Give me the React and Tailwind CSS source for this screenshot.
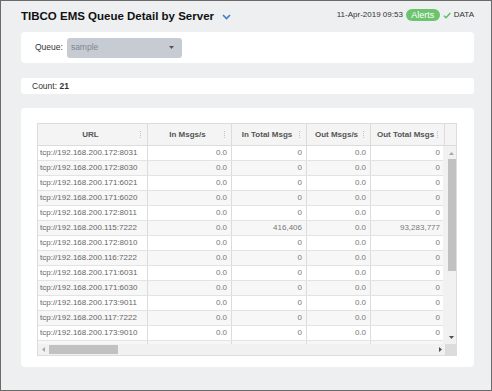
import React from "react";

const rows = [
  ["tcp://192.168.200.172:8031", "0.0", "0", "0.0", "0"],
  ["tcp://192.168.200.172:8030", "0.0", "0", "0.0", "0"],
  ["tcp://192.168.200.171:6021", "0.0", "0", "0.0", "0"],
  ["tcp://192.168.200.171:6020", "0.0", "0", "0.0", "0"],
  ["tcp://192.168.200.172:8011", "0.0", "0", "0.0", "0"],
  ["tcp://192.168.200.115:7222", "0.0", "416,406", "0.0", "93,283,777"],
  ["tcp://192.168.200.172:8010", "0.0", "0", "0.0", "0"],
  ["tcp://192.168.200.116:7222", "0.0", "0", "0.0", "0"],
  ["tcp://192.168.200.171:6031", "0.0", "0", "0.0", "0"],
  ["tcp://192.168.200.171:6030", "0.0", "0", "0.0", "0"],
  ["tcp://192.168.200.173:9011", "0.0", "0", "0.0", "0"],
  ["tcp://192.168.200.117:7222", "0.0", "0", "0.0", "0"],
  ["tcp://192.168.200.173:9010", "0.0", "0", "0.0", "0"],
  ["tcp://SLVMOOT10:7011", "0.0", "0", "0.0", "0"],
];

const cols = [
  { name: "URL", w: "w-[110px]" },
  { name: "In Msgs/s", w: "w-[84px]" },
  { name: "In Total Msgs", w: "w-[75px]" },
  { name: "Out Msgs/s", w: "w-[64px]" },
  { name: "Out Total Msgs", w: "w-[74px]" },
];

function SortIcon() {
  return (
    <svg width="3" height="7" viewBox="0 0 3 7" className="shrink-0">
      <rect x="1" y="0" width="1" height="1" fill="#c4c4c4" />
      <rect x="1" y="2" width="1" height="1" fill="#c4c4c4" />
      <rect x="1" y="4" width="1" height="1" fill="#c4c4c4" />
      <rect x="1" y="6" width="1" height="1" fill="#c4c4c4" />
    </svg>
  );
}

export default function App() {
  return (
    <div className="w-[492px] h-[391px] border border-[#6a6a6a] bg-[#edeff1] flex flex-col pl-[20px] pr-[17px] font-['Liberation_Sans',Arial,sans-serif] overflow-hidden">
      {/* Header */}
      <div className="h-[31px] flex items-start justify-between shrink-0">
        <div className="flex items-center pt-[8px]">
          <span className="text-[11.5px] leading-[14px] font-bold text-[#111]">
            TIBCO EMS Queue Detail by Server
          </span>
          <svg width="9" height="6" viewBox="0 0 9 6" className="ml-[8px] mt-[2px]">
            <path d="M1 1 L4.5 4.5 L8 1" stroke="#3f7fc4" strokeWidth="1.6" fill="none" />
          </svg>
        </div>
        <div className="flex items-center pt-[7px]">
          <span className="text-[8px] leading-[14px] text-[#333]">11-Apr-2019 09:53</span>
          <span className="ml-[3px] h-[12px] w-[34px] rounded-full bg-[#6cc46f] text-white text-[9px] leading-[12px] flex items-center justify-center">
            Alerts
          </span>
          <svg width="8" height="7" viewBox="0 0 8 7" className="ml-[3px]">
            <path d="M0.8 3.6 L3 5.8 L7.3 1" stroke="#5cb85c" strokeWidth="1.3" fill="none" />
          </svg>
          <span className="ml-[3px] text-[8px] leading-[14px] text-[#333]">DATA</span>
        </div>
      </div>

      {/* Queue card */}
      <div className="h-[31px] bg-white rounded-[4px] flex items-center pl-[14px] shrink-0">
        <span className="text-[8.5px] text-[#333]">Queue:</span>
        <div className="ml-[4px] w-[115px] h-[20px] rounded-[3px] bg-[#c7ccd4] flex items-center justify-between pl-[4px] pr-[8px]">
          <span className="text-[8.5px] text-[#7f8692]">sample</span>
          <svg width="5" height="3" viewBox="0 0 5 3">
            <path d="M0 0 L5 0 L2.5 3 Z" fill="#555" />
          </svg>
        </div>
      </div>

      {/* Count card */}
      <div className="mt-[15px] h-[16px] bg-white rounded-[3px] flex items-center pl-[11px] shrink-0">
        <span className="text-[8.5px] text-[#333]">
          Count: <span className="font-bold">21</span>
        </span>
      </div>

      {/* Table card */}
      <div className="mt-[14px] h-[259px] bg-white rounded-[4px] pl-[16px] pt-[15px] shrink-0">
        <div className="w-[420px] border border-[#dcdcdc] flex flex-col">
          {/* header */}
          <div className="flex h-[22px] bg-[#f4f4f4] border-b border-[#dcdcdc]">
            {cols.map((c, i) => (
              <div
                key={i}
                className={`${c.w} shrink-0 border-r border-[#dcdcdc] flex items-center pl-[4px] pr-[5px]`}
              >
                <span className="flex-1 text-center text-[8px] font-bold text-[#555] whitespace-nowrap">
                  {c.name}
                </span>
                <SortIcon />
              </div>
            ))}
            <div className="flex-1" />
          </div>
          {/* body */}
          <div className="flex h-[198px]">
            <div className="w-[407px] overflow-hidden">
              {rows.map((r, ri) => (
                <div
                  key={ri}
                  className={`flex h-[15px] border-b border-[#e3e3e3] ${ri % 2 === 1 ? "bg-[#f7f7f7]" : "bg-white"}`}
                >
                  {r.map((v, ci) => (
                    <div
                      key={ci}
                      className={`${cols[ci].w} shrink-0 border-r border-[#dcdcdc] flex items-center text-[8px] whitespace-nowrap ${
                        ci === 0 ? "pl-[2px] text-[#666]" : "justify-end pr-[4px] text-[#777]"
                      }`}
                    >
                      {v}
                    </div>
                  ))}
                </div>
              ))}
            </div>
            {/* vertical scrollbar */}
            <div className="w-[13px] bg-[#f1f1f1] flex flex-col items-center">
              <svg width="5" height="3" viewBox="0 0 5 3" className="mt-[6px] ml-[3px]">
                <path d="M0 3 L5 3 L2.5 0 Z" fill="#a8a8a8" />
              </svg>
              <div className="mt-[4px] ml-[4px] w-[8px] h-[112px] bg-[#c1c1c1]" />
              <div className="flex-1" />
              <svg width="5" height="3" viewBox="0 0 5 3" className="mb-[5px] ml-[3px]">
                <path d="M0 0 L5 0 L2.5 3 Z" fill="#505050" />
              </svg>
            </div>
          </div>
          {/* horizontal scrollbar */}
          <div className="flex h-[11px]">
            <div className="w-[407px] bg-[#f1f1f1] flex items-center">
              <svg width="3" height="5" viewBox="0 0 3 5" className="ml-[4px]">
                <path d="M3 0 L3 5 L0 2.5 Z" fill="#a8a8a8" />
              </svg>
              <div className="ml-[4px] w-[69px] h-[9px] bg-[#c1c1c1]" />
              <div className="flex-1" />
              <svg width="3" height="5" viewBox="0 0 3 5" className="mr-[3px]">
                <path d="M0 0 L0 5 L3 2.5 Z" fill="#505050" />
              </svg>
            </div>
            <div className="flex-1 bg-[#dcdcdc]" />
          </div>
        </div>
      </div>
    </div>
  );
}
